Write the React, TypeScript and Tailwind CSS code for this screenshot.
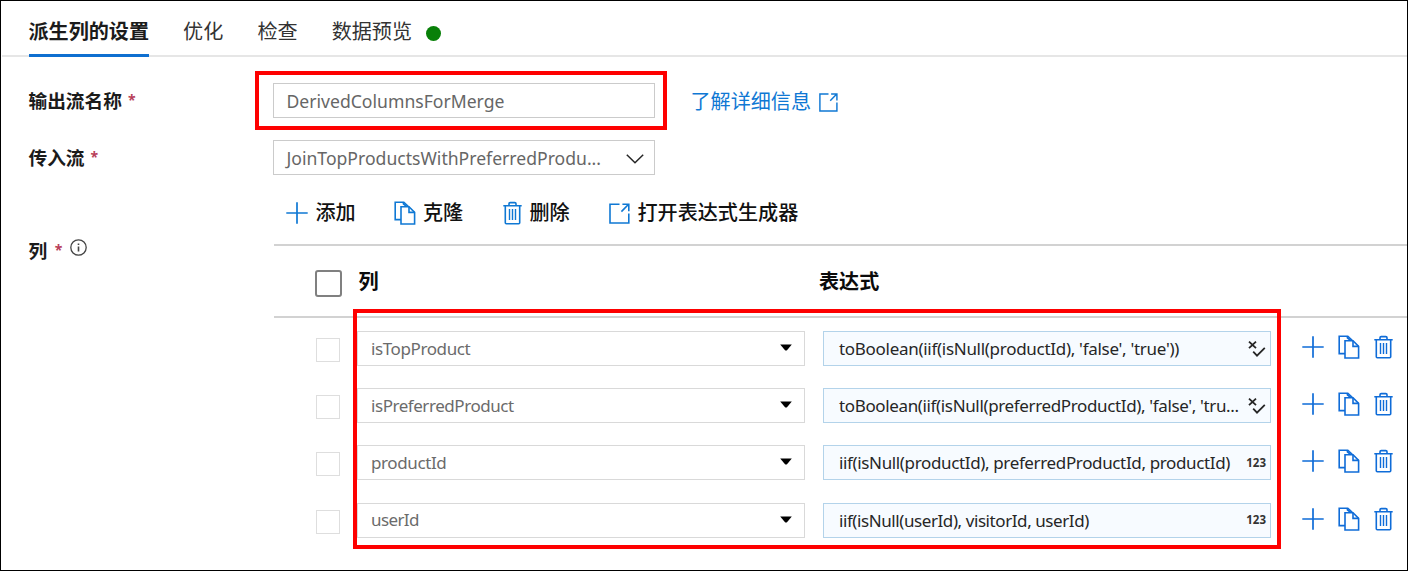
import React from 'react';

function PlusIcon() {
  return (
    <svg width="22" height="22" viewBox="0 0 22 22" fill="none" stroke="currentColor" strokeWidth="1.7" className="shrink-0">
      <path d="M11 .3v21.4M.3 11h21.4" />
    </svg>
  );
}

function CopyIcon() {
  return (
    <svg width="22" height="24" viewBox="0 0 22 24" fill="none" stroke="currentColor" strokeWidth="1.6" className="shrink-0">
      <path d="M7 18.6H1.2V1.2h8.6l4.4 4.2" />
      <path d="M7 5.8h8l5.6 5.6v11.6H7z" />
      <path d="M9.4 1.2v1.6l3 2.6M15 5.8v5.6h5.6" />
    </svg>
  );
}

function TrashIcon() {
  return (
    <svg width="19" height="24" viewBox="0 0 19 24" fill="none" stroke="currentColor" strokeWidth="1.6" className="shrink-0">
      <path d="M.3 4.8h18.4M2.3 4.8v17c0 .6.4 1 1 1h12.4c.6 0 1-.4 1-1v-17" />
      <path d="M6 4.6V2.8c0-.7.5-1.2 1.2-1.2h4.6c.7 0 1.2.5 1.2 1.2v1.8" />
      <path d="M6.5 8v11M9.5 8v11M12.5 8v11" strokeWidth="1.4" />
    </svg>
  );
}

function OpenIcon({ size }: { size: number }) {
  return (
    <svg width={size} height={size} viewBox="0 0 21 21" fill="none" stroke="currentColor" strokeWidth="1.6" className="shrink-0">
      <path d="M10.5 1.2H1v18.8h18.8v-9.4" />
      <path d="M12.4 8.6 19.6 1.2M13.4 1.2h6.4v7" />
    </svg>
  );
}

function BooleanIcon() {
  return (
    <svg width="18" height="18" viewBox="0 0 18 18" fill="none" stroke="#262626" className="shrink-0">
      <path d="M1 1.6l7 6.6M8 1.6L1 8.2" strokeWidth="1.8" />
      <path d="M5.2 11.6l3.8 4L16.8 7.8" strokeWidth="1.8" />
    </svg>
  );
}

const tabs = ['优化', '检查', '数据预览'];

const rows = [
  { name: 'isTopProduct', track: 'tracking-[-0.4px]', expr: "toBoolean(iif(isNull(productId), 'false', 'true'))", etrack: 'tracking-[-0.29px]', bool: true },
  { name: 'isPreferredProduct', track: 'tracking-[-0.45px]', expr: "toBoolean(iif(isNull(preferredProductId), 'false', 'tru...", etrack: 'tracking-[-0.36px]', bool: true },
  { name: 'productId', track: 'tracking-[-0.4px]', expr: 'iif(isNull(productId), preferredProductId, productId)', etrack: 'tracking-[-0.36px]', bool: false },
  { name: 'userId', track: 'tracking-[-0.6px]', expr: 'iif(isNull(userId), visitorId, userId)', etrack: 'tracking-[-0.42px]', bool: false },
];

function Label({ children }: { children: string }) {
  return (
    <div className="flex w-[244.5px] shrink-0 items-center pt-[2px] text-[18.7px] font-bold text-[#1b1b1b]">
      {children}
      <span className="mb-[2px] ml-[6px] text-[14px] font-bold text-[#b8405a]">*</span>
    </div>
  );
}

export default function App() {
  return (
    <div className="relative flex h-[571px] w-[1408px] flex-col overflow-hidden border border-black bg-white font-['Noto_Sans','Noto_Sans_CJK_SC',sans-serif] leading-none whitespace-nowrap">
      <nav className="ml-px flex h-[56px] shrink-0 border-b-2 border-[#e6e6e6] pl-[26.5px] text-[20.1px] text-[#333]">
        <div className="flex h-[56px] w-[120.5px] items-center border-b-[3px] border-[#0f6fd0] pt-[10px] font-bold text-[#1b1b1b]">
          派生列的设置
        </div>
        {tabs.map((tab) => (
          <div key={tab} className="ml-[34.1px] flex h-[54px] items-center pt-[9px]">
            {tab}
          </div>
        ))}
        <span className="mt-[24.5px] ml-[13.5px] size-[15px] rounded-full bg-[#088008]" />
      </nav>

      <div className="mt-[26px] flex h-[35px] shrink-0 items-center pl-[27.5px]">
        <Label>输出流名称</Label>
        <div className="flex h-[35px] w-[382px] items-center border-[1.5px] border-[#cbcbcb] pt-[3px] pl-[12.5px] text-[17.6px] text-[#666]">
          DerivedColumnsForMerge
        </div>
        <a className="ml-[35.5px] flex items-center gap-[7.5px] pt-[3px] text-[20.1px] text-[#0f78d4]">
          了解详细信息
          <OpenIcon size={19} />
        </a>
      </div>

      <div className="mt-[22px] flex h-[35px] shrink-0 items-center pl-[27.5px]">
        <Label>传入流</Label>
        <div className="flex h-[35px] w-[382px] items-center justify-between border-[1.5px] border-[#cbcbcb] pt-[3px] pr-[10px] pl-[12.5px] text-[17.6px] text-[#666]">
          JoinTopProductsWithPreferredProdu...
          <svg width="18" height="10" viewBox="0 0 18 10" fill="none" stroke="#262626" strokeWidth="1.5">
            <path d="M.8.8 9 8.8 17.2.8" />
          </svg>
        </div>
      </div>

      <div className="flex grow">
        <div className="mt-[65px] flex h-[22px] w-[273px] shrink-0 items-center pl-[27.5px] text-[18.7px] font-bold text-[#1b1b1b]">
          列
          <span className="mb-[2px] ml-[7.5px] text-[14px] font-bold text-[#b8405a]">*</span>
          <svg width="17" height="17" viewBox="0 0 17 17" fill="none" stroke="#444" className="mb-[8px] ml-[7.5px]">
            <circle cx="8.5" cy="8.5" r="7.7" strokeWidth="1.3" />
            <path d="M8.5 7.4v5M8.5 4.4v1.6" strokeWidth="1.6" />
          </svg>
        </div>

        <div className="flex grow flex-col">
          <div className="flex h-[69px] shrink-0 items-center pt-[8px] pl-[11.5px] text-[20.1px] font-medium text-[#111]">
            <div className="flex w-[108px] items-center gap-[8px]">
              <span className="-mt-px text-[#0f78d4]"><PlusIcon /></span>添加
            </div>
            <div className="flex w-[109px] items-center gap-[7.5px]">
              <span className="-mt-px text-[#0f78d4]"><CopyIcon /></span>克隆
            </div>
            <div className="flex w-[106px] items-center gap-[8px]">
              <span className="-mt-px text-[#0f78d4]"><TrashIcon /></span>删除
            </div>
            <div className="flex items-center gap-[8px]">
              <span className="text-[#0f78d4]"><OpenIcon size={21} /></span>打开表达式生成器
            </div>
          </div>

          <div className="flex h-[74px] shrink-0 items-center border-y-2 border-[#d2d2d2] pl-[41px] text-[20.1px] font-bold text-[#0b0b0b]">
            <span className="mt-[4px] size-[27px] shrink-0 rounded-[3px] border-2 border-[#808080]" />
            <span className="ml-[16.5px] w-[460.5px] pt-[3px]">列</span>
            <span className="pt-[3px]">表达式</span>
          </div>

          <div className="flex flex-col gap-[22.2px] pt-[13px] pl-[42px]">
            {rows.map((row) => (
              <div key={row.name} className="flex h-[35px] items-center">
                <span className="mt-[3px] size-[24px] shrink-0 border-[1.5px] border-[#dedede]" />
                <div className="ml-[17px] flex h-[35px] w-[448px] shrink-0 items-center justify-between border-[1.5px] border-[#d9d9d9] pr-[12.5px] pl-[13px] text-[17px] text-[#6b6b6b]">
                  <span className={`-mt-px ${row.track}`}>{row.name}</span>
                  <svg width="12" height="7" viewBox="0 0 12 7" className="mb-[2px]">
                    <path d="M.2.4h11.6L7 6.2q-1 .8-2 0z" fill="#000" />
                  </svg>
                </div>
                <div className="ml-[17.5px] flex h-[35px] w-[448.5px] shrink-0 items-center justify-between border-[1.5px] border-[#b3d3ea] bg-[#f7fbff] pr-[4px] pl-[15.5px] text-[17px] text-[#262626]">
                  <span className={row.etrack}>{row.expr}</span>
                  {row.bool ? <BooleanIcon /> : <span className="text-[11.5px] font-bold text-[#333]">123</span>}
                </div>
                <div className="mb-[3px] ml-[31px] flex items-center text-[#0f6cd8]">
                  <PlusIcon />
                  <span className="ml-[14px]"><CopyIcon /></span>
                  <span className="ml-[14px]"><TrashIcon /></span>
                </div>
              </div>
            ))}
          </div>
        </div>
      </div>

      <div className="pointer-events-none absolute top-[70px] left-[254px] h-[59px] w-[412px] border-4 border-[#fe0000]" />
      <div className="pointer-events-none absolute top-[308px] left-[352px] h-[240px] w-[928px] border-4 border-[#fe0000]" />
    </div>
  );
}
